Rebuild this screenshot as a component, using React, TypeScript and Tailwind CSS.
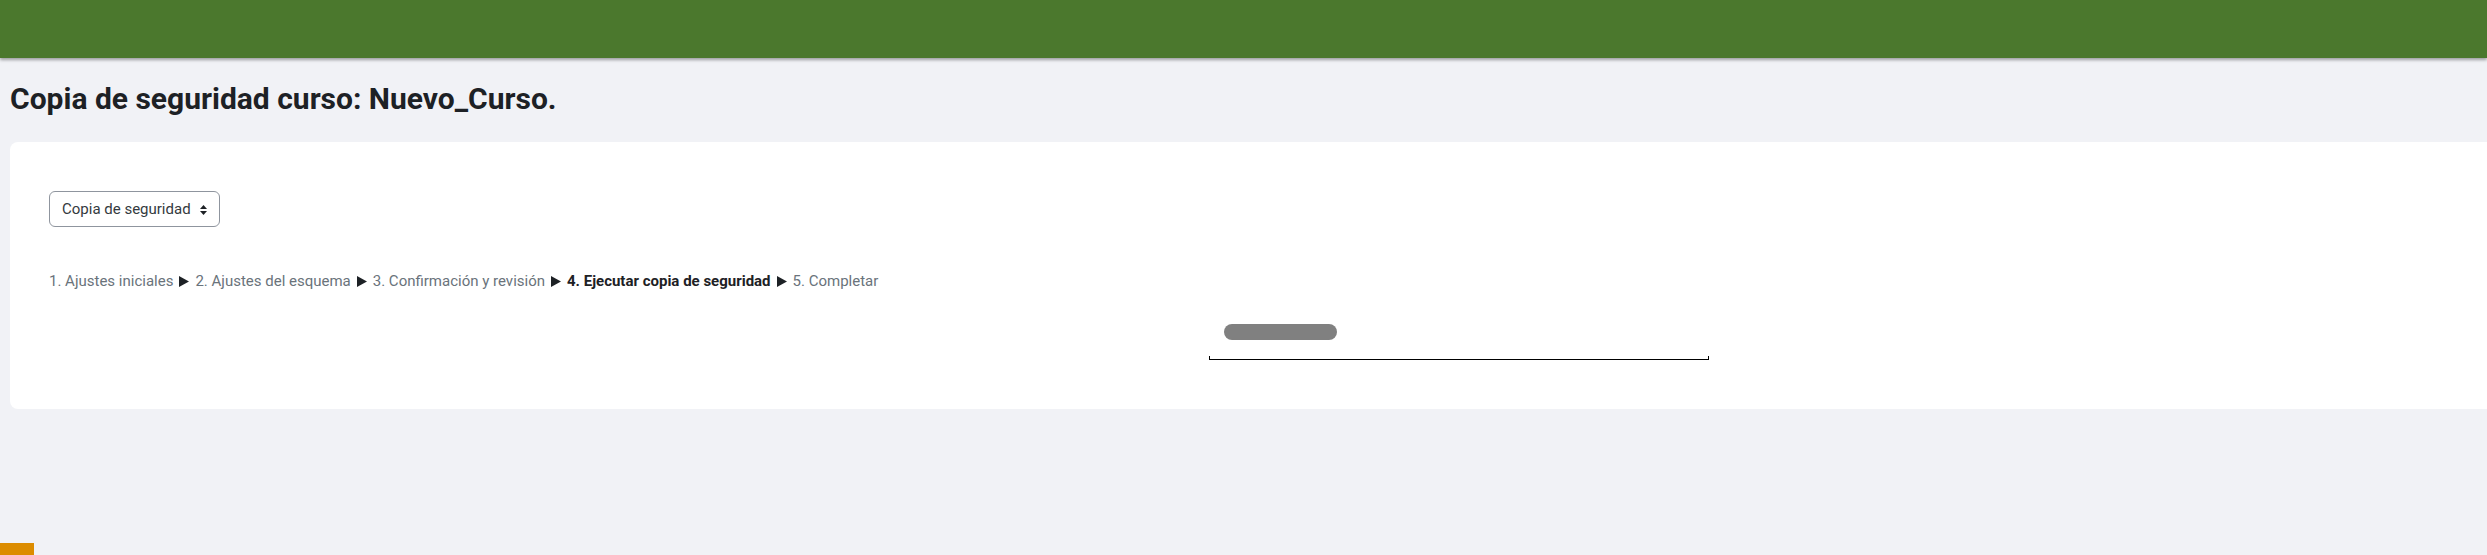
export default function App() {
  const steps = [
    '1. Ajustes iniciales',
    '2. Ajustes del esquema',
    '3. Confirmación y revisión',
    '4. Ejecutar copia de seguridad',
    '5. Completar',
  ]
  const current = 3

  return (
    <div className="relative min-h-[555px] overflow-hidden bg-[#f1f2f6] font-['Roboto','Liberation_Sans',sans-serif] text-[#1d2125]">
      {/* barra superior */}
      <header className="relative z-10 h-[58px] bg-[#4b782d] shadow-[0_2px_3px_rgba(0,0,0,0.35)]" />

      <div className="pl-[10px]">
        <h2 className="mt-[23px] text-[30px] font-bold leading-[36px] text-[#1d2125]">
          Copia de seguridad curso: Nuevo_Curso.
        </h2>

        <div className="mt-[25px] h-[267px] rounded-l-lg bg-white pl-[39px] pt-[49px]">
          <div className="flex h-[36px] w-[171px] items-center justify-between rounded-md border border-[#8f959e] pl-[12px] pr-[12px] text-[15px] text-[#343a40]">
            <span>Copia de seguridad</span>
            <svg width="7" height="10" viewBox="0 0 7 10" className="mt-[1px]">
              <path d="M3.5 0 L7 4 H0 Z" fill="#1d2125" />
              <path d="M0 6 H7 L3.5 10 Z" fill="#1d2125" />
            </svg>
          </div>

          <div className="mt-[43px] flex items-center text-[15px] leading-[22px]">
            {steps.map((s, i) => (
              <div key={s} className="flex items-center">
                {i > 0 && (
                  <svg width="10" height="11" viewBox="0 0 10 11" className="mx-[6px]">
                    <path d="M0 0 L10 5.5 L0 11 Z" fill="#1d2125" />
                  </svg>
                )}
                <span className={i === current ? 'font-bold text-[#1d2125]' : 'text-[#6a737b]'}>{s}</span>
              </div>
            ))}
          </div>

          <div className="ml-[1160px] mt-[32px] w-[500px]">
            <div className="ml-[15px] h-[16px] w-[113px] rounded-full bg-[#808080]" />
            <div className="mt-[16px] h-[4px] border-x border-b border-black" />
          </div>
        </div>
      </div>

      {/* botón de pie de página, cortado */}
      <div className="absolute bottom-0 left-0 h-[12px] w-[34px] bg-[#dc8c00]" />
    </div>
  )
}
